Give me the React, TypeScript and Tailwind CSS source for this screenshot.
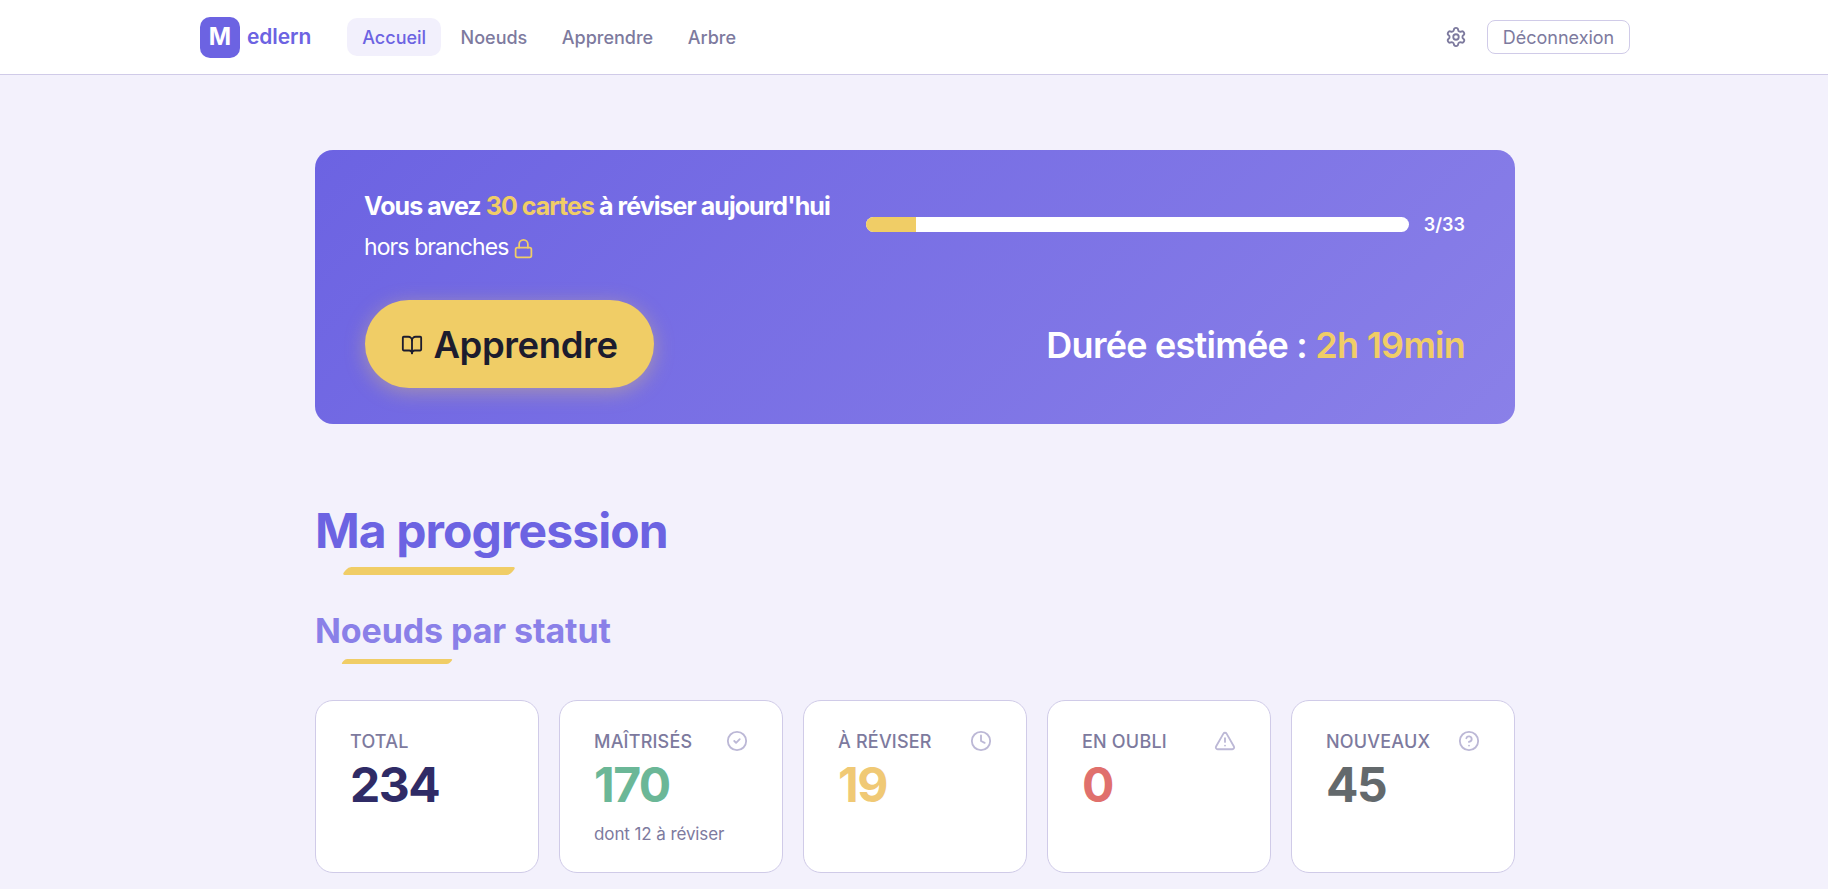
import React from "react";
import { Settings, BookOpen, Lock, CircleCheck, Clock, TriangleAlert, CircleHelp } from "lucide-react";

const navLinks = ["Accueil", "Noeuds", "Apprendre", "Arbre"];

const stats = [
  { label: "TOTAL", value: "234", color: "text-[#2f2b66]", icon: null, sub: null },
  { label: "MAÎTRISÉS", value: "170", color: "text-[#6bb797]", icon: CircleCheck, sub: "dont 12 à réviser" },
  { label: "À RÉVISER", value: "19", color: "text-[#f0c975]", icon: Clock, sub: null },
  { label: "EN OUBLI", value: "0", color: "text-[#e0706c]", icon: TriangleAlert, sub: null },
  { label: "NOUVEAUX", value: "45", color: "text-[#63696c]", icon: CircleHelp, sub: null },
];

const Navbar = () => (
  <header className="h-[75px] bg-white border-b border-[#d0cbe8]">
    <div className="w-[1430px] ml-[200px] h-full flex items-center justify-between">
      <div className="flex items-center">
        <div className="flex items-center gap-[7px] mr-[36px]">
          <div className="w-[40px] h-[41px] rounded-[10px] bg-[#6c63e2] flex items-center justify-center text-white text-[24px] font-bold">
            M
          </div>
          <span className="text-[#6c63e2] text-[21px] font-semibold tracking-[-0.1px]">edlern</span>
        </div>
        <nav className="flex items-center gap-[4.5px]">
          {navLinks.map((link, i) => (
            <a
              key={link}
              className={
                i === 0
                  ? "h-[38px] px-[15px] pt-[1px] rounded-[10px] bg-[#f2f0fc] text-[#6c63e2] text-[18px] font-medium flex items-center"
                  : "h-[38px] px-[15px] pt-[1px] text-[#7d7a9e] text-[18px] font-medium flex items-center"
              }
            >
              {link}
            </a>
          ))}
        </nav>
      </div>
      <div className="flex items-center gap-[20px]">
        <Settings className="w-[22px] h-[22px] text-[#7d7a9e]" strokeWidth={2} />
        <button className="h-[34px] w-[143px] pt-[1px] rounded-[8px] border border-[#d0cbe8] bg-white text-[#7d7a9e] text-[18px]">
          Déconnexion
        </button>
      </div>
    </div>
  </header>
);

const Hero = () => (
  <section className="h-[274px] rounded-[18px] bg-[linear-gradient(135deg,#6c63e2,#8a80e8)] px-[50px] pt-[38px]">
    <div className="flex items-start justify-between">
      <div className="-ml-[1px]">
        <p className="text-white text-[25px] leading-[36px] font-bold tracking-[-0.95px]">
          Vous avez <span className="text-[#f0cd66]">30 cartes</span> à réviser aujourd'hui
        </p>
        <p className="mt-[5px] text-white text-[23px] leading-[36px] tracking-[-0.9px] flex items-center gap-[4px]">
          hors branches <Lock className="w-[21px] h-[21px] text-[#f0cd66] mt-[3px]" strokeWidth={2} />
        </p>
      </div>
      <div className="w-[599px] flex items-center gap-[15px] mt-[23px]">
        <div className="flex-1 h-[15px] rounded-full bg-white overflow-hidden">
          <div className="h-full w-[50px] bg-[#f0cd66]" />
        </div>
        <span className="text-white text-[18px] font-semibold">3/33</span>
      </div>
    </div>
    <div className="flex items-center justify-between mt-[35px]">
      <button className="w-[289px] h-[88px] pt-[2px] rounded-full bg-[#f0cd66] text-[#1c1c2e] flex items-center justify-center gap-[10px] text-[36.5px] font-semibold tracking-[-0.4px] shadow-[0_4px_20px_rgba(240,205,102,0.4)]">
        <BookOpen className="w-[22px] h-[22px]" strokeWidth={2} />
        Apprendre
      </button>
      <p className="pt-[2px] text-white text-[36px] font-semibold tracking-[-0.75px]">
        Durée estimée : <span className="text-[#f0cd66]">2h 19min</span>
      </p>
    </div>
  </section>
);

const App = () => (
  <div className="h-[889px] overflow-hidden bg-[#f3f1fc] font-['Inter',sans-serif]">
    <Navbar />
    <main className="w-[1200px] ml-[315px] pt-[75px]">
      <Hero />
      <h1 className="mt-[79px] text-[#6c63e2] text-[48px] leading-[56px] font-bold tracking-[-0.9px]">Ma progression</h1>
      <div className="ml-[30px] mt-[8px] w-[168px] h-[8px] bg-[#f0cd66] rounded-[3px] -skew-x-[40deg]" />
      <h2 className="mt-[34px] text-[#8a80e8] text-[34px] leading-[44px] font-bold tracking-[-0.1px]">Noeuds par statut</h2>
      <div className="ml-[28px] mt-[6px] w-[108px] h-[5px] bg-[#f0cd66] rounded-[2px] -skew-x-[40deg]" />
      <div className="mt-[36px] grid grid-cols-5 gap-[20px]">
        {stats.map((s) => (
          <div key={s.label} className="h-[173px] rounded-[18px] bg-white border border-[#d0cbe8] pl-[34px] pr-[34px] pt-[28px]">
            <div className="flex items-center justify-between h-[24px]">
              <span className="text-[#7d7a9e] text-[18px] font-medium tracking-[0.2px]">{s.label}</span>
              {s.icon && <s.icon className="w-[22px] h-[22px] text-[#bcb8d6]" strokeWidth={2} />}
            </div>
            <div className={`mt-[2px] text-[48px] leading-[60px] font-bold tracking-[-1.5px] ${s.color}`}>{s.value}</div>
            {s.sub && <div className="mt-[7px] text-[#7d7a9e] text-[17px] tracking-[-0.1px]">{s.sub}</div>}
          </div>
        ))}
      </div>
    </main>
  </div>
);

export default App;
